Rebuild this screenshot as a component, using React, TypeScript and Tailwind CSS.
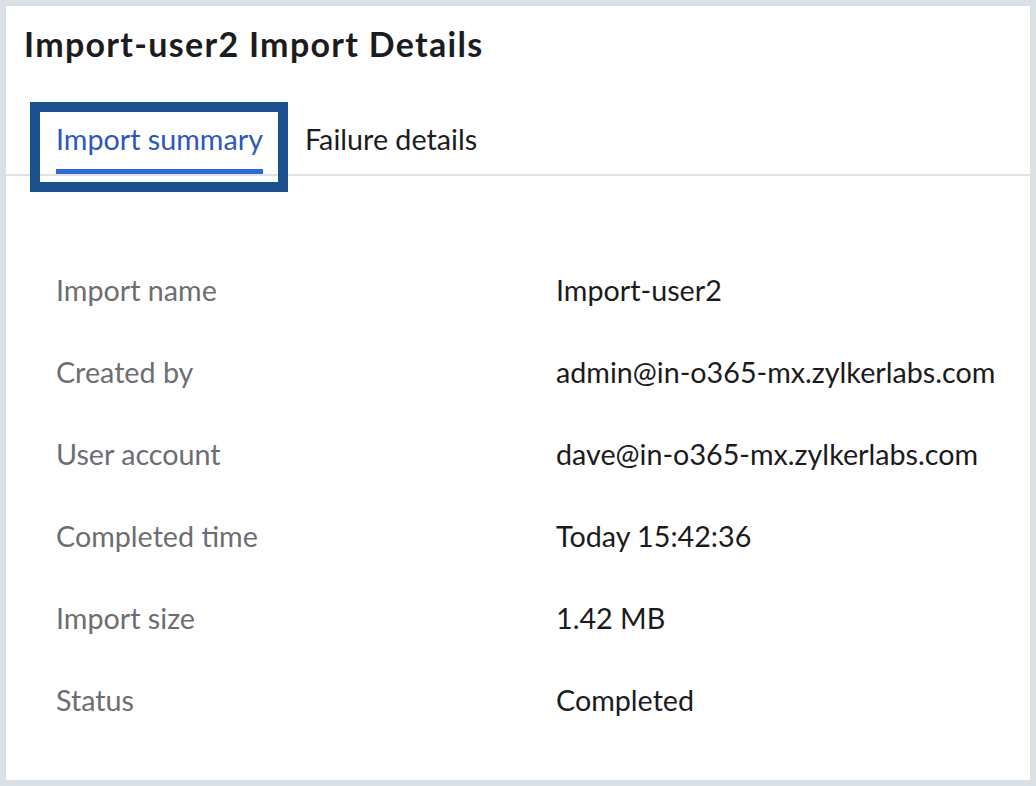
const rows = [
  { label: "Import name", value: "Import-user2" },
  { label: "Created by", value: "admin@in-o365-mx.zylkerlabs.com" },
  { label: "User account", value: "dave@in-o365-mx.zylkerlabs.com" },
  { label: "Completed time", value: "Today 15:42:36" },
  { label: "Import size", value: "1.42 MB" },
  { label: "Status", value: "Completed" },
]

export default function App() {
  return (
    <div
      className="w-[1036px] h-[786px] bg-[#d9e1e6] p-[6px]"
      style={{ fontFamily: "Lato, 'Open Sans', sans-serif" }}
    >
      <div className="relative h-full bg-white">
        <h1 className="pl-[18px] pt-[18px] text-[34px] leading-[40px] tracking-[1.3px] font-bold text-[#1c1c1e]">
          Import-user2 Import Details
        </h1>

        <div className="mt-[57px] flex gap-[42px] pl-[50px] border-b-2 border-[#e0e3e6]">
          <button className="pb-[12px] border-b-[5px] border-[#3068d8] text-[28.7px] leading-[36px] text-[#2c59ba]">
            Import summary
          </button>
          <button className="pb-[12px] border-b-[5px] border-transparent text-[28.7px] leading-[36px] text-[#1c1c1e]">
            Failure details
          </button>
        </div>

        {/* highlight box around active tab */}
        <div className="absolute left-[24px] top-[96px] w-[258px] h-[90px] border-[10px] border-[#1b4f8e] pointer-events-none" />

        <div className="mt-[73px] pl-[50px]">
          {rows.map((r) => (
            <div key={r.label} className="grid grid-cols-[500px_1fr] h-[82px] items-center text-[28.7px] leading-[36px]">
              <span className="text-[#6c6e72]">{r.label}</span>
              <span className="text-[#1b1b1d]">{r.value}</span>
            </div>
          ))}
        </div>
      </div>
    </div>
  )
}
